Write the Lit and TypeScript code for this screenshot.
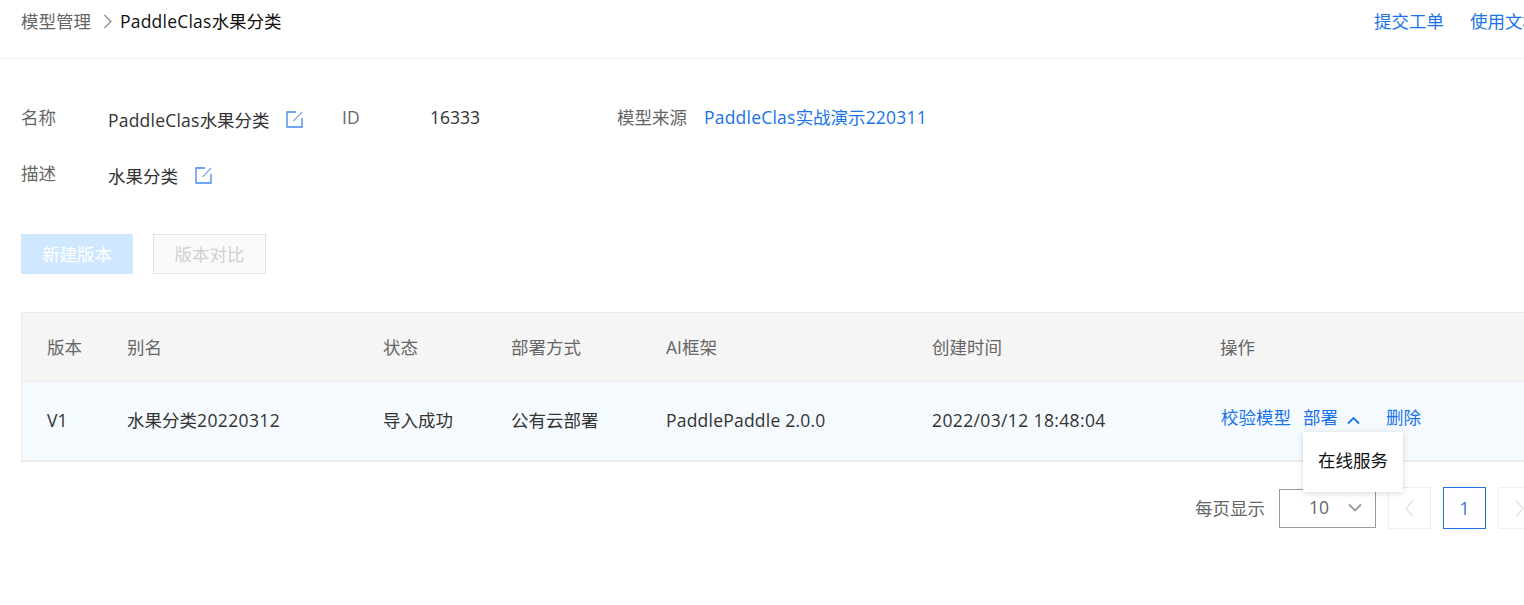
import { LitElement, html, css, svg } from "lit";
import { customElement } from "lit/decorators.js";

const editIcon = svg`<svg class="edit" width="17" height="17" viewBox="0 0 17 17" fill="none"><path d="M10 1H1V16H16V7" stroke="#3f86f2" stroke-width="1.3"/><path d="M7.5 10L16.2 1" stroke="#7fa8ee" stroke-width="1.1"/></svg>`;

@customElement("app-root")
export class AppRoot extends LitElement {
  static styles = css`
    :host {
      display: block;
      width: 1524px;
      height: 605px;
      overflow: hidden;
      background: #fff;
      font-family: "Open Sans", "Noto Sans CJK SC", sans-serif;
      font-size: 17.5px;
      color: #333;
      line-height: 24px;
    }
    .page { width: 1561px; }
    a { color: #1a73e8; text-decoration: none; }
    .ls { letter-spacing: 0.22px; }
    .ln { letter-spacing: 0.37px; }
    .header {
      height: 59px;
      box-sizing: border-box;
      border-bottom: 1px solid #eeeeee;
      padding: 9px 21px 0;
      display: flex;
      justify-content: space-between;
      align-items: flex-start;
    }
    .crumbs { display: flex; align-items: center; }
    .crumb-root { color: #666; }
    .crumb-sep { margin: 0 7px 0 12px; display: block; }
    .crumb-cur { color: #111; }
    .links { display: flex; gap: 26px; }
    .meta { padding: 46px 21px 0; }
    .meta-row { display: flex; height: 56px; }
    .meta-row.second { height: 73px; }
    .label { color: #666; width: 87px; flex: none; }
    .value { display: flex; align-items: flex-start; padding-top: 3px; color: #333; }
    .edit { margin: 3px 0 0 16px; display: block; flex: none; }
    .second .edit { margin-left: 17px; }
    .col-a { width: 234px; flex: none; }
    .col-id-label { width: 88px; flex: none; }
    .col-id { width: 187px; flex: none; }
    .col-src-label { width: 87px; flex: none; }
    .actions { display: flex; gap: 20px; padding: 0 21px; }
    .btn {
      box-sizing: border-box;
      height: 40px;
      display: flex;
      align-items: center;
      justify-content: center;
    }
    .btn-primary { width: 112px; background: #d0e8ff; color: #fff; }
    .btn-ghost { width: 113px; background: #fafafa; border: 1px solid #e2e2e2; color: #d0d0d0; }
    .table {
      margin: 38px 21px 0;
      border: 1px solid #ebebeb;
      border-bottom-width: 2px;
    }
    .tr {
      display: grid;
      grid-template-columns: 80px 256px 128px 155px 266px 288px 1fr;
      padding-left: 25px;
      align-items: center;
      box-sizing: border-box;
    }
    .thead { height: 69px; background: #f5f5f5; color: #666; border-bottom: 1px solid #edf1f5; }
    .tbody { height: 78px; background: #f5fafe; color: #333; padding-bottom: 2px; }
    .ops { display: flex; align-items: center; position: relative; top: -3px; margin-left: 1px; }
    .chev { margin: 1px 0 0 9px; display: block; }
    .del { margin-left: 26px; }
    .gap { margin-left: 12px; }
    .cell-op { position: relative; }
    .menu {
      position: absolute;
      box-sizing: border-box;
      left: 83px;
      top: 24px;
      width: 100px;
      height: 60px;
      padding-bottom: 4px;
      background: #fff;
      box-shadow: 0 1px 6px rgba(0, 0, 0, 0.16);
      display: flex;
      align-items: center;
      justify-content: center;
      color: #111;
      z-index: 2;
    }
    .pager {
      display: flex;
      align-items: center;
      margin: 25px 0 0 1195px;
      height: 42px;
    }
    .pager-label { color: #666; width: 84px; flex: none; }
    .select {
      box-sizing: border-box;
      width: 97px;
      height: 39px;
      border: 1px solid #9a9a9a;
      display: flex;
      align-items: center;
      color: #666;
      padding: 0 0 2px 29px;
    }
    .select svg { margin-left: 19px; display: block; }
    .pg {
      box-sizing: border-box;
      width: 43px;
      height: 42px;
      border: 1px solid #eeeeee;
      display: flex;
      align-items: center;
      justify-content: center;
      margin-left: 12px;
    }
    .pg.cur { border-color: #1a73e8; color: #3a6fe0; }
  `;

  render() {
    const chev = (d: string, c: string, w: number, h: number, sw = 1.5) =>
      html`<svg width=${w} height=${h} viewBox="0 0 ${w} ${h}" fill="none"><path d=${d} stroke=${c} stroke-width=${sw}/></svg>`;
    return html`
      <div class="page">
        <div class="header">
          <div class="crumbs">
            <span class="crumb-root">模型管理</span>
            <svg class="crumb-sep" width="10" height="16" viewBox="0 0 10 16" fill="none"><path d="M1.5 2L8 8.5L1.5 15" stroke="#8a8a8a" stroke-width="1.2"/></svg>
            <span class="crumb-cur"><span class="ls">PaddleClas</span>水果分类</span>
          </div>
          <div class="links"><a>提交工单</a><a>使用文档</a></div>
        </div>
        <div class="meta">
          <div class="meta-row">
            <span class="label">名称</span>
            <span class="value col-a"><span class="ls">PaddleClas</span>水果分类${editIcon}</span>
            <span class="label col-id-label">ID</span>
            <span class="col-id">16333</span>
            <span class="label col-src-label">模型来源</span>
            <a><span class="ls">PaddleClas</span>实战演示<span class="ls">220311</span></a>
          </div>
          <div class="meta-row second">
            <span class="label">描述</span>
            <span class="value">水果分类${editIcon}</span>
          </div>
        </div>
        <div class="actions">
          <div class="btn btn-primary">新建版本</div>
          <div class="btn btn-ghost">版本对比</div>
        </div>
        <div class="table">
          <div class="tr thead">
            <span>版本</span><span>别名</span><span>状态</span><span>部署方式</span><span>AI框架</span><span>创建时间</span><span>操作</span>
          </div>
          <div class="tr tbody">
            <span>V1</span><span>水果分类<span class="ln">20220312</span></span><span>导入成功</span><span>公有云部署</span><span class="ls">PaddlePaddle 2.0.0</span><span class="ln">2022/03/12 18:48:04</span>
            <div class="cell-op">
              <div class="ops">
                <a>校验模型</a><a class="gap">部署</a>
                <span class="chev">${chev("M1 7.5L6.5 2L12 7.5", "#1a73e8", 13, 9, 1.8)}</span>
                <a class="del">删除</a>
              </div>
              <div class="menu">在线服务</div>
            </div>
          </div>
        </div>
        <div class="pager">
          <span class="pager-label">每页显示</span>
          <div class="select">10${chev("M1 1.5L7 7.5L13 1.5", "#999", 14, 9, 1.8)}</div>
          <div class="pg">${chev("M9 1.5L2 9.5L9 17.5", "#e4e4e4", 11, 19)}</div>
          <div class="pg cur">1</div>
          <div class="pg">${chev("M2 1.5L9 9.5L2 17.5", "#e4e4e4", 11, 19)}</div>
        </div>
      </div>
    `;
  }
}
